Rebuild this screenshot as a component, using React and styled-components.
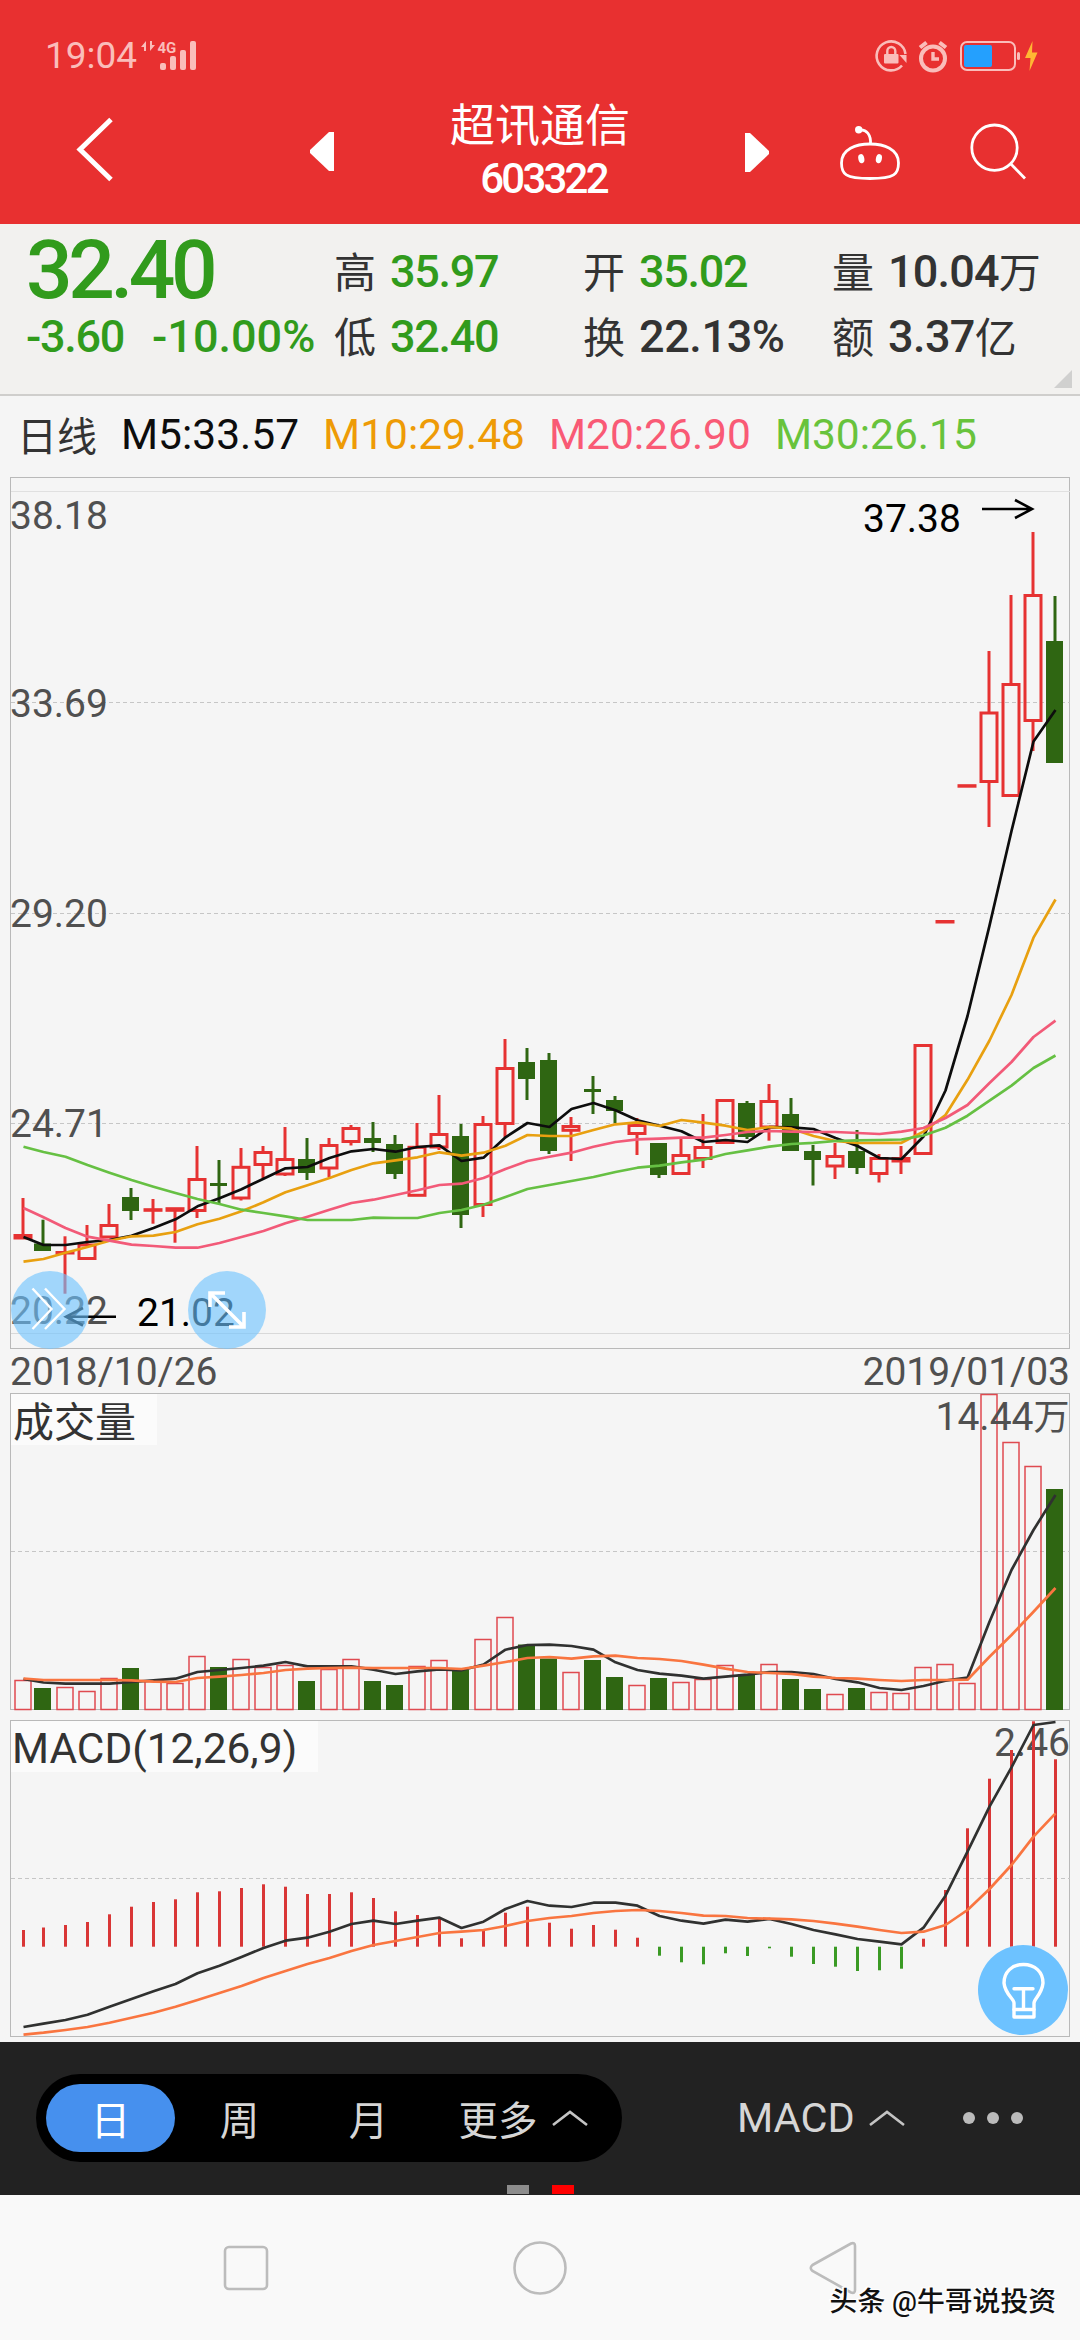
import React from 'react';
import styled, { createGlobalStyle } from 'styled-components';

const RED = '#e63232';
const GREEN = '#2f6612';
const QUOTE_GREEN = '#319b1c';

const GlobalStyle = createGlobalStyle`
  * {
    box-sizing: border-box;
  }

  body {
    margin: 0;
    background: #f5f5f5;
    font-family: Roboto, 'Noto Sans CJK SC', sans-serif;
  }
`;

const Screen = styled.div`
  display: flex;
  flex-direction: column;
  width: 1080px;
  height: 2340px;
  overflow: hidden;
  background: #f5f5f5;
`;

/* ---------- header ---------- */

const Header = styled.header`
  display: flex;
  flex-direction: column;
  height: 224px;
  background: #e83030;
  color: #fff;
`;

const StatusBar = styled.div`
  display: flex;
  align-items: center;
  justify-content: space-between;
  height: 96px;
  padding: 16px 40px 0 45px;
`;

const StatusGroup = styled.div`
  display: flex;
  align-items: center;
`;

const Clock = styled.span`
  width: 95px;
  font-size: 37px;
  line-height: 44px;
  color: #fabdba;
`;

const TitleBar = styled.div`
  display: flex;
  align-items: flex-start;
  height: 128px;
`;

const HeaderIcon = styled.svg`
  flex: none;
  width: ${({ $w }) => $w}px;
  height: 110px;
  margin-left: ${({ $gap }) => $gap || 0}px;
  fill: none;
  stroke: #fff;
`;

const Title = styled.div`
  flex: none;
  display: flex;
  flex-direction: column;
  align-items: center;
  width: 360px;
  margin-left: 20px;
  margin-right: 5px;
`;

const StockName = styled.span`
  padding-top: 1px;
  font-size: 45px;
  line-height: 60px;
`;

const StockCode = styled.span`
  padding-left: 7px;
  font-size: 42px;
  font-weight: 500;
  line-height: 44px;
  letter-spacing: -2.8px;
`;

/* ---------- quote ---------- */

const Quote = styled.section`
  position: relative;
  display: grid;
  grid-template-columns: 308px 249px 249px 1fr;
  height: 172px;
  padding: 14px 0 0 26px;
  background: #f2f1ef;
  border-bottom: 2px solid #cfcecc;
  color: #333;
`;

const QuoteColumn = styled.div`
  display: flex;
  flex-direction: column;
  white-space: nowrap;
`;

const QuoteRow = styled.div`
  display: flex;
  align-items: center;
  height: 65px;
  font-size: 42px;
`;

const QuoteLabel = styled.span`
  padding-bottom: 3px;
`;

const QuoteValue = styled.span`
  margin-left: ${({ $gap = 14 }) => $gap}px;
  padding-top: 1px;
  font-size: 45px;
  font-weight: 500;
  letter-spacing: ${({ $spacing = -1.3 }) => $spacing}px;
  color: ${({ $down }) => ($down ? QUOTE_GREEN : '#333')};
`;

const LastPrice = styled.span`
  font-size: 82px;
  font-weight: 500;
  letter-spacing: -4.4px;
  line-height: 65px;
  color: ${QUOTE_GREEN};
`;

const Corner = styled.i`
  position: absolute;
  right: 8px;
  bottom: 6px;
  border-left: 18px solid transparent;
  border-bottom: 18px solid #d0d0cf;
`;

/* ---------- charts ---------- */

const Legend = styled.div`
  display: flex;
  align-items: center;
  height: 80px;
  padding: 0 0 3px 17px;
  color: #333;
  white-space: nowrap;
`;

const LegendTitle = styled.span`
  padding-bottom: 2px;
  font-size: 40px;
`;

const LegendItem = styled.span`
  margin-left: 24px;
  font-size: 42.5px;
  color: ${({ $color }) => $color};
`;

const ChartSvg = styled.svg`
  flex: none;
  display: block;
  width: 1080px;
  height: ${({ $h }) => $h}px;
  font-family: Roboto, 'Noto Sans CJK SC', sans-serif;
`;

const ChartArea = styled.div`
  position: relative;
  flex: none;
  display: flex;
`;

const DateRow = styled.div`
  display: flex;
  align-items: center;
  justify-content: space-between;
  flex: none;
  height: 43px;
  padding: 1px 10px 0;
  font-size: 39px;
  line-height: 43px;
  color: #505050;
`;

const FloatButton = styled.button`
  position: absolute;
  left: ${({ $x }) => $x}px;
  bottom: ${({ $bottom }) => $bottom}px;
  width: ${({ $size }) => $size}px;
  height: ${({ $size }) => $size}px;
  padding: 0;
  border: none;
  border-radius: 50%;
  background: ${({ $bg }) => $bg};

  svg {
    display: block;
    width: 100%;
    height: 100%;
    fill: none;
    stroke: #fff;
  }
`;

/* ---------- bottom ---------- */

const Toolbar = styled.div`
  position: relative;
  flex: none;
  display: flex;
  align-items: center;
  height: 153px;
  margin-top: 5px;
  padding: 0 0 2px 36px;
  background: #222;
  color: #d6d6d6;
`;

const Periods = styled.div`
  display: flex;
  align-items: center;
  width: 586px;
  height: 88px;
  padding: 0 10px;
  border-radius: 44px;
  background: #000;
`;

const Period = styled.div`
  flex: none;
  display: flex;
  align-items: center;
  justify-content: center;
  width: ${({ $w = 129 }) => $w}px;
  height: 68px;
  border-radius: 34px;
  font-size: 39.5px;
  color: ${({ $active }) => ($active ? '#fff' : '#d6d6d6')};
  background: ${({ $active }) => ($active ? '#4690ee' : 'transparent')};
`;

const Caret = styled.svg`
  width: 36px;
  height: 18px;
  margin-left: 14px;
  fill: none;
  stroke: #c4c4c4;
  stroke-width: 2.6;
`;

const Indicator = styled.div`
  display: flex;
  align-items: center;
  margin-left: 115px;
  font-size: 41.5px;
`;

const Dots = styled.div`
  display: flex;
  gap: 12px;
  margin-left: 58px;

  i {
    width: 12px;
    height: 12px;
    border-radius: 50%;
    background: #bbb;
  }
`;

const Pager = styled.div`
  position: absolute;
  left: 507px;
  bottom: 1px;
  display: flex;
  gap: 23px;
`;

const PagerMark = styled.i`
  width: 22px;
  height: 9px;
  background: ${({ $active }) => ($active ? '#f00' : '#8c8c8c')};
`;

const NavBar = styled.nav`
  position: relative;
  flex: 1;
  display: flex;
  align-items: center;
  justify-content: space-between;
  padding: 0 216px;
  background: #f9f9f9;

  svg {
    width: 60px;
    height: 60px;
    fill: none;
    stroke: #bcbcbc;
    stroke-width: 2.6;
  }
`;

const Watermark = styled.span`
  position: absolute;
  right: 24px;
  bottom: 20px;
  font-size: 27.8px;
  font-weight: 500;
  line-height: 36px;
  color: #111;
  text-shadow: -1px -1px 0 #fff, -2px -1px 0 #fff, 1px -1px 0 #fff;
  white-space: nowrap;
`;

// [up, high, bodyTop, bodyBottom, low] in chart coordinates
const candles = [
  [1, 1198, 1235.5, 1238, 1238], [0, 1219.7, 1243.5, 1251, 1251], [1, 1236.3, 1252.5, 1253, 1293.7],
  [1, 1225, 1245, 1258.5, 1258.5], [1, 1204, 1225.5, 1237, 1237], [0, 1188, 1197, 1211, 1220],
  [1, 1199, 1209.7, 1210.3, 1223.7], [1, 1208, 1208.7, 1210.3, 1242.7], [1, 1146, 1179.5, 1210.5, 1218],
  [0, 1160, 1183, 1186, 1203], [1, 1148, 1167.3, 1198, 1200.5], [1, 1146, 1152.5, 1164.5, 1178],
  [1, 1127, 1159.5, 1174, 1176], [0, 1138, 1159, 1173, 1180], [1, 1138, 1145.5, 1168, 1177],
  [1, 1125, 1128.5, 1141.5, 1145.5], [0, 1122, 1138, 1143, 1152], [0, 1135, 1144, 1174, 1179],
  [1, 1123, 1147.3, 1195.3, 1195.3], [1, 1095, 1134.5, 1147, 1150], [0, 1124, 1136, 1215, 1228],
  [1, 1116, 1124.5, 1204.5, 1217], [1, 1039, 1068.5, 1123.5, 1137], [0, 1048, 1062, 1079, 1100],
  [0, 1053, 1060, 1151, 1154], [1, 1117, 1126.5, 1130.3, 1161], [0, 1076, 1089, 1092, 1114],
  [0, 1096, 1100, 1111, 1123], [1, 1118, 1125.5, 1133.5, 1155], [0, 1143, 1143, 1175, 1178],
  [1, 1138, 1155.5, 1173.5, 1173.5], [1, 1114, 1147.5, 1158.5, 1168], [1, 1100.5, 1100.5, 1142.5, 1142.5],
  [0, 1101, 1103, 1137, 1139], [1, 1084, 1101.5, 1127, 1140.7], [0, 1098, 1114, 1151, 1151],
  [0, 1145, 1151, 1160, 1185.5], [1, 1143, 1156.5, 1166, 1179], [0, 1130, 1151, 1168, 1174],
  [1, 1154, 1158.5, 1173.5, 1182.5], [1, 1146, 1158.5, 1161, 1174], [1, 1045.5, 1045.5, 1153.5, 1153.5],
  [1, 921.5, 921.5, 922, 922], [1, 785.7, 785.7, 786.2, 786], [1, 651, 713, 781.5, 827],
  [1, 595, 684.5, 795.5, 795.5], [1, 532, 595.5, 720.5, 751], [0, 596, 641, 763, 763],
];

const ma5 = [1237, 1245, 1245, 1242, 1240, 1235.7, 1228, 1219.3, 1206.3, 1198.3, 1189.3, 1178.7, 1168.3, 1167, 1158, 1151.3, 1149, 1151.7, 1147, 1145.3, 1161, 1157.7, 1137.3, 1123, 1127, 1109, 1103, 1110.3, 1120.3, 1125.7, 1131.3, 1142, 1140, 1142, 1127, 1127.3, 1129, 1138, 1146, 1158, 1159, 1136.5, 1090.5, 1016, 925.6, 831, 741.5, 710];
const ma10 = [1261.7, 1259, 1252.7, 1247, 1240.7, 1236.3, 1235.7, 1232, 1224.3, 1218.7, 1211.3, 1202.3, 1192.3, 1185.3, 1178, 1170, 1163.3, 1160.3, 1157.3, 1152.3, 1155.7, 1152.7, 1145.7, 1135, 1136, 1136, 1130, 1124.3, 1122.3, 1126, 1120, 1122.7, 1125.7, 1130, 1127, 1128.7, 1136, 1141, 1143, 1142.8, 1142.8, 1131.6, 1115, 1079.8, 1040.5, 995, 937.7, 899.5];
const ma20 = [1208, 1217.3, 1228, 1236.7, 1240.7, 1244.7, 1246, 1247.7, 1247.7, 1243, 1237, 1231, 1223.3, 1216.7, 1209.7, 1203, 1199.7, 1195, 1190.3, 1185, 1183.7, 1178, 1169, 1161, 1156.7, 1152.7, 1146.7, 1142, 1139.3, 1138.7, 1137.7, 1137.7, 1135, 1132, 1131, 1131.6, 1132, 1132, 1133, 1134, 1131.6, 1128, 1118, 1105, 1083, 1062, 1037, 1020.7];
const ma30 = [1146.7, 1152, 1156.7, 1165, 1172.7, 1180, 1186.7, 1193, 1199, 1204, 1209.7, 1213, 1216.3, 1220, 1220, 1220, 1217.7, 1218, 1218, 1213, 1210, 1204.7, 1197, 1189, 1185, 1181, 1177, 1172, 1167.7, 1165.7, 1162.3, 1159.7, 1154, 1150.3, 1146.7, 1144, 1142.8, 1141, 1140.4, 1140, 1139.5, 1135.5, 1127.8, 1115.7, 1100.6, 1085.6, 1068, 1055.5];

const volumes = [1680.5, 1688, 1687.5, 1691.5, 1678.5, 1668, 1681.5, 1683.5, 1656.5, 1667, 1659.5, 1667.5, 1665.5, 1681, 1669.5, 1659.5, 1681, 1685, 1666.5, 1660.5, 1669.5, 1639.5, 1617.5, 1644.5, 1658.5, 1672.5, 1660, 1677, 1685.5, 1678, 1682.5, 1679.5, 1665.5, 1674.5, 1664.5, 1679, 1689, 1694.5, 1688, 1692.5, 1693.5, 1667.5, 1664.5, 1683.5, 1394.5, 1442.5, 1466.5, 1489];
const vol5 = [1679, 1682.5, 1683.7, 1683.7, 1683.7, 1682, 1680.3, 1678.7, 1672, 1670, 1668, 1665.7, 1662, 1666.3, 1666.3, 1666.3, 1669.7, 1674, 1671.3, 1669.3, 1670.3, 1664.5, 1649.7, 1645, 1644.7, 1646, 1649.7, 1662.3, 1670, 1673.7, 1675.7, 1678.7, 1676.7, 1674.7, 1672, 1672, 1674, 1679, 1682.3, 1688, 1690, 1686, 1680.7, 1677.7, 1621.7, 1570, 1530, 1495];
const vol10 = [1678.5, 1680, 1680, 1680, 1680, 1680.3, 1681.7, 1682, 1678, 1676.7, 1675, 1673, 1670, 1668.7, 1668, 1667.7, 1668, 1668, 1668, 1668, 1669, 1665.7, 1662, 1658, 1657, 1658.7, 1656.3, 1655.7, 1658, 1659, 1661, 1664.7, 1668.7, 1672, 1673, 1674, 1676.7, 1678, 1678.7, 1680, 1681, 1680, 1680, 1679.7, 1656.7, 1635, 1611.7, 1588];

const macdBars = [1930, 1927.5, 1925, 1922, 1914.3, 1906.7, 1902, 1899.3, 1892.3, 1891.3, 1888, 1884.3, 1886.7, 1894, 1894, 1892.3, 1898, 1911.3, 1915, 1919, 1938.3, 1930.7, 1912.7, 1906.7, 1922.7, 1928.7, 1925, 1929.7, 1937.7, 1955.7, 1962.3, 1964.3, 1953.3, 1956, 1948.3, 1956.7, 1964, 1966.7, 1971, 1970.3, 1968.7, 1938.7, 1890, 1828.3, 1778.7, 1750, 1721.3, 1759.3];
const dif = [2027, 2023.7, 2020, 2014.7, 2006.7, 1999, 1991.3, 1984, 1973.3, 1965.7, 1957, 1948, 1940.7, 1937.7, 1931.7, 1924, 1920.7, 1924, 1920.7, 1917.7, 1928, 1921.7, 1909, 1901, 1905.7, 1907, 1902.7, 1902.7, 1905.7, 1916, 1920.7, 1923.7, 1919.7, 1921.7, 1919, 1924, 1930, 1934.3, 1939, 1941.7, 1944.3, 1927.7, 1895.7, 1851.7, 1806.7, 1767.3, 1725, 1722];
const dea = [2034.7, 2032.7, 2030, 2027, 2022.7, 2017.7, 2012.7, 2006.7, 2000, 1993, 1986, 1978, 1971, 1964, 1958, 1951, 1945, 1941, 1937, 1933, 1931.7, 1930, 1926, 1921, 1918, 1916, 1913, 1911, 1910, 1911, 1913, 1915.7, 1916, 1918, 1918.7, 1919.3, 1921, 1923.7, 1926.7, 1930, 1933, 1931.7, 1925, 1910, 1889, 1865, 1836.7, 1813.3];

const xAt = (i) => (i === 0 ? 23 : 21 + i * 22);
const toPoints = (ys) => ys.map((y, i) => `${xAt(i) + 0.5},${y}`).join(' ');

const Line = ({ ys, color, width = 2.7 }) => (
  <polyline points={toPoints(ys)} fill="none" stroke={color} strokeWidth={width} strokeLinejoin="round" />
);

const Frame = ({ top, bottom }) => (
  <rect x="10.5" y={top} width="1059" height={bottom - top} fill="none" stroke="#b9b9b9" />
);

const Grid = ({ y }) => (
  <line x1="11" x2="1070" y1={y} y2={y} stroke="#c6c6c6" strokeDasharray="4 3" />
);

const Candle = ({ index, data }) => {
  const [up, high, top, bottom, low] = data;
  const x = xAt(index);
  if (!up) {
    return (
      <g>
        <line x1={x} x2={x} y1={high} y2={low} stroke={GREEN} strokeWidth="3" />
        <rect x={x - 9} y={top} width="17" height={bottom - top} fill={GREEN} />
      </g>
    );
  }
  return (
    <g stroke={RED} strokeWidth="3">
      <line x1={x} x2={x} y1={high} y2={top} />
      <rect x={x - 8} y={top} width="16" height={bottom - top} fill="none" />
      <line x1={x} x2={x} y1={bottom} y2={low} />
    </g>
  );
};

const PriceChart = () => (
  <ChartArea>
    <ChartSvg $h={874} viewBox="0 476 1080 874">
      <Frame top={477.5} bottom={1348.5} />
      <line x1="11" x2="1070" y1="491.5" y2="491.5" stroke="#e0e0e0" />
      <line x1="11" x2="1070" y1="1333.5" y2="1333.5" stroke="#d9d9d9" />
      <Grid y={702.5} />
      <Grid y={913.5} />
      <Grid y={1123.5} />
      <g fontSize="39" fill="#505050">
        <text x="10" y="528.5">38.18</text>
        <text x="10" y="716.5">33.69</text>
        <text x="10" y="926.5">29.20</text>
        <text x="10" y="1136.5">24.71</text>
        <text x="10" y="1324">20.22</text>
      </g>
      {candles.map((c, i) => <Candle key={i} index={i} data={c} />)}
      <Line ys={ma5} color="#0d0d0d" />
      <Line ys={ma10} color="#e8a010" />
      <Line ys={ma20} color="#f25a78" />
      <Line ys={ma30} color="#66c043" />
      <g fontSize="39" fill="#000">
        <text x="863" y="532">37.38</text>
        <text x="137" y="1326">21.02</text>
      </g>
      <g fill="none" stroke="#000" strokeWidth="2.6">
        <path d="M982 509H1032M1015 500L1032 509L1015 518" />
        <path d="M116 1316.7H66M83 1308L66 1316.7L83 1325.5" />
      </g>
    </ChartSvg>
    <FloatButton $x={11} $bottom={1} $size={78} $bg="rgba(110, 195, 255, 0.62)">
      <svg viewBox="0 0 78 78" strokeWidth="2.4">
        <path d="M21.5 17.5L40.5 38L21.5 58M34 17.5L53.5 38L34 58" />
      </svg>
    </FloatButton>
    <FloatButton $x={188} $bottom={1} $size={78} $bg="rgba(110, 195, 255, 0.62)">
      <svg viewBox="0 0 78 78" strokeWidth="3.6">
        <path d="M22 22L56 56M37 22H22V36M56 41V56H41" />
      </svg>
    </FloatButton>
  </ChartArea>
);

const VolumeChart = () => (
  <ChartSvg $h={320} viewBox="0 1393 1080 320">
    <Frame top={1393.5} bottom={1709.5} />
    <Grid y={1551.5} />
    <rect x="11" y="1394" width="146" height="51" fill="#fbfbfb" />
    <text x="13" y="1436.5" fontSize="41" fill="#333">成交量</text>
    {volumes.map((y, i) => {
      const x = xAt(i);
      return candles[i][0] ? (
        <rect key={i} x={x - 8} y={y} width="16" height={1709.5 - y} fill="none" stroke="#df4a50" strokeWidth="1.5" />
      ) : (
        <rect key={i} x={x - 9} y={y} width="17" height={1710 - y} fill={GREEN} />
      );
    })}
    <text x="1069.5" y="1429.5" fontSize="39" fill="#505050" textAnchor="end">
      14.44<tspan fontSize="36">万</tspan>
    </text>
    <Line ys={vol5} color="#303130" />
    <Line ys={vol10} color="#f97540" />
  </ChartSvg>
);

const MacdChart = () => (
  <ChartArea>
    <ChartSvg $h={324} viewBox="0 1713 1080 324">
      <Frame top={1720.5} bottom={2036.5} />
      <Grid y={1878.5} />
      <rect x="11" y="1721" width="307" height="51" fill="#fbfbfb" />
      <text x="12" y="1763" fontSize="42.4" fill="#333">MACD(12,26,9)</text>
      <text x="1070" y="1756" fontSize="39" fill="#505050" textAnchor="end">2.46</text>
      {macdBars.map((y, i) => (
        <line
          key={i}
          x1={xAt(i) + 0.5}
          x2={xAt(i) + 0.5}
          y1={y}
          y2={1946.7}
          stroke={y > 1946.7 ? '#3a9a24' : '#d93636'}
          strokeWidth="3"
        />
      ))}
      <Line ys={dif} color="#303130" />
      <Line ys={dea} color="#f97540" />
    </ChartSvg>
    <FloatButton $x={978} $bottom={2} $size={90} $bg="#6dc2ff">
      <svg viewBox="978 1945 90 90" strokeWidth="3.4" strokeLinecap="round" strokeLinejoin="round">
        <path d="M1014 2017V2003C1014 1999 1005 1994 1004 1983C1004 1972 1012 1964.5 1023.5 1964.5S1043 1972 1043 1983C1042 1994 1034 1999 1034 2003V2017Z" />
        <path d="M1014 1988.7H1033M1023.5 1989V2009M1014 2009.5H1034" />
      </svg>
    </FloatButton>
  </ChartArea>
);

const StatusIcons = () => (
  <svg width="150" height="36" viewBox="873 37 150 36" fill="none" stroke="#fabdba">
    <path d="M902 64.5A14.5 14.5 0 1 1 905.5 53" strokeWidth="2.6" />
    <path d="M899.5 54H906.5V62Z" fill="#fabdba" stroke="none" />
    <rect x="884" y="53" width="14.5" height="9.5" rx="1" fill="#fabdba" stroke="none" />
    <path d="M887.3 53V50A4 4 0 0 1 895.3 50V53" strokeWidth="2.4" />
    <circle cx="933" cy="57.5" r="12" strokeWidth="4" />
    <path d="M933 51V58H939" strokeWidth="3.4" />
    <path d="M920 46.5L926.5 41.5M946 46.5L939.5 41.5" strokeWidth="4" />
    <rect x="961" y="41" width="54" height="28" rx="6" strokeWidth="2" />
    <rect x="964" y="44" width="28" height="22" rx="2" fill="#24a0fe" stroke="none" />
    <rect x="1017" y="51" width="3" height="8" rx="1.5" fill="#fabdba" stroke="none" />
  </svg>
);

const TopHeader = () => (
  <Header>
    <StatusBar>
      <StatusGroup>
        <Clock>19:04</Clock>
        <svg width="60" height="34" viewBox="140 39 60 34" fill="#fabdba">
          <path d="M141 47L146 41V51H144V47ZM155 45L150 51V41H152V45Z" />
          <text x="157.5" y="52.5" fontSize="15" fontWeight="700" fontFamily="Roboto, sans-serif">4G</text>
          <rect x="160" y="63" width="6" height="7" rx="2" />
          <rect x="170" y="56" width="6" height="14" rx="2" />
          <rect x="180" y="50" width="6" height="20" rx="2" />
          <rect x="190" y="41" width="6" height="29" rx="2" />
        </svg>
      </StatusGroup>
      <StatusGroup>
        <StatusIcons />
        <svg width="17" height="36" viewBox="1021 37 17 36" fill="#ffb733">
          <path d="M1030.5 40L1023 57H1028.5L1027.5 70L1035.5 51.5H1030Z" />
        </svg>
      </StatusGroup>
    </StatusBar>
    <TitleBar>
      <HeaderIcon $w={60} $gap={65} viewBox="65 96 60 110" strokeWidth="5">
        <path d="M111 119.5L80 149.5L111 179.5" />
      </HeaderIcon>
      <HeaderIcon $w={40} $gap={175} viewBox="300 96 40 110">
        <path d="M334 132H329L310 150V153L329 171H334Z" fill="#fff" stroke="none" />
      </HeaderIcon>
      <Title>
        <StockName>超讯通信</StockName>
        <StockCode>603322</StockCode>
      </Title>
      <HeaderIcon $w={40} $gap={15} viewBox="740 96 40 110">
        <path d="M745 133H750L769 151V154L750 172H745Z" fill="#fff" stroke="none" />
      </HeaderIcon>
      <HeaderIcon $w={80} $gap={50} viewBox="830 96 80 110" strokeWidth="2.8">
        <path d="M870 144C884 144 898.5 149 898.5 163C898.5 174 895 178.5 870 178.5S841.5 174 841.5 163C841.5 149 856 144 870 144Z" />
        <path d="M859 130C867 129 871 135 870.5 144" />
        <circle cx="858.7" cy="129.7" r="3.7" fill="#fff" stroke="none" />
        <ellipse cx="861.3" cy="158.7" rx="3" ry="4.6" fill="#fff" stroke="none" transform="rotate(-12 861.3 158.7)" />
        <ellipse cx="878.9" cy="158.7" rx="3" ry="4.6" fill="#fff" stroke="none" transform="rotate(12 878.9 158.7)" />
      </HeaderIcon>
      <HeaderIcon $w={70} $gap={55} viewBox="965 96 70 110" strokeWidth="2.8">
        <circle cx="994.5" cy="147.7" r="22.7" />
        <path d="M1010.4 163.5L1025 178.5" />
      </HeaderIcon>
    </TitleBar>
  </Header>
);

const stats = [
  [
    { label: '高', value: '35.97', down: true },
    { label: '低', value: '32.40', down: true },
  ],
  [
    { label: '开', value: '35.02', down: true },
    { label: '换', value: '22.13%', spacing: -0.4 },
  ],
  [
    { label: '量', value: '10.04', unit: '万', spacing: -0.8 },
    { label: '额', value: '3.37', unit: '亿', spacing: -0.6 },
  ],
];

const periods = ['日', '周', '月'];

const App = () => (
  <>
    <GlobalStyle />
    <Screen>
      <TopHeader />
      <Quote>
        <QuoteColumn>
          <QuoteRow><LastPrice>32.40</LastPrice></QuoteRow>
          <QuoteRow>
            <QuoteValue $down $gap={0}>-3.60</QuoteValue>
            <QuoteValue $down $gap={28} $spacing={0}>-10.00%</QuoteValue>
          </QuoteRow>
        </QuoteColumn>
        {stats.map((column, i) => (
          <QuoteColumn key={i}>
            {column.map((s) => (
              <QuoteRow key={s.label}>
                <QuoteLabel>{s.label}</QuoteLabel>
                <QuoteValue $down={s.down} $spacing={s.spacing}>{s.value}</QuoteValue>
                {s.unit && <QuoteLabel>{s.unit}</QuoteLabel>}
              </QuoteRow>
            ))}
          </QuoteColumn>
        ))}
        <Corner />
      </Quote>
      <Legend>
        <LegendTitle>日线</LegendTitle>
        <LegendItem $color="#0d0d0d">M5:33.57</LegendItem>
        <LegendItem $color="#ee9b06">M10:29.48</LegendItem>
        <LegendItem $color="#f95a75">M20:26.90</LegendItem>
        <LegendItem $color="#68c33c">M30:26.15</LegendItem>
      </Legend>
      <PriceChart />
      <DateRow>
        <span>2018/10/26</span>
        <span>2019/01/03</span>
      </DateRow>
      <VolumeChart />
      <MacdChart />
      <Toolbar>
        <Periods>
          {periods.map((p, i) => <Period key={p} $active={i === 0}>{p}</Period>)}
          <Period $w={180}>
            更多
            <Caret viewBox="0 0 36 18"><path d="M1 16L18 3L35 16" /></Caret>
          </Period>
        </Periods>
        <Indicator>
          MACD
          <Caret viewBox="0 0 36 18"><path d="M1 16L18 3L35 16" /></Caret>
        </Indicator>
        <Dots><i /><i /><i /></Dots>
        <Pager>
          <PagerMark />
          <PagerMark $active />
        </Pager>
      </Toolbar>
      <NavBar>
        <svg viewBox="0 0 60 60"><rect x="9" y="9" width="42" height="42" rx="4" /></svg>
        <svg viewBox="0 0 60 60"><circle cx="30" cy="30" r="25.5" /></svg>
        <svg viewBox="0 0 60 60">
          <path d="M8.5 27L47 5.5Q51 4 51 8V52Q51 56 47 54.5L8.5 33Q5 30 8.5 27Z" />
        </svg>
        <Watermark>头条 @牛哥说投资</Watermark>
      </NavBar>
    </Screen>
  </>
);

export default App;
